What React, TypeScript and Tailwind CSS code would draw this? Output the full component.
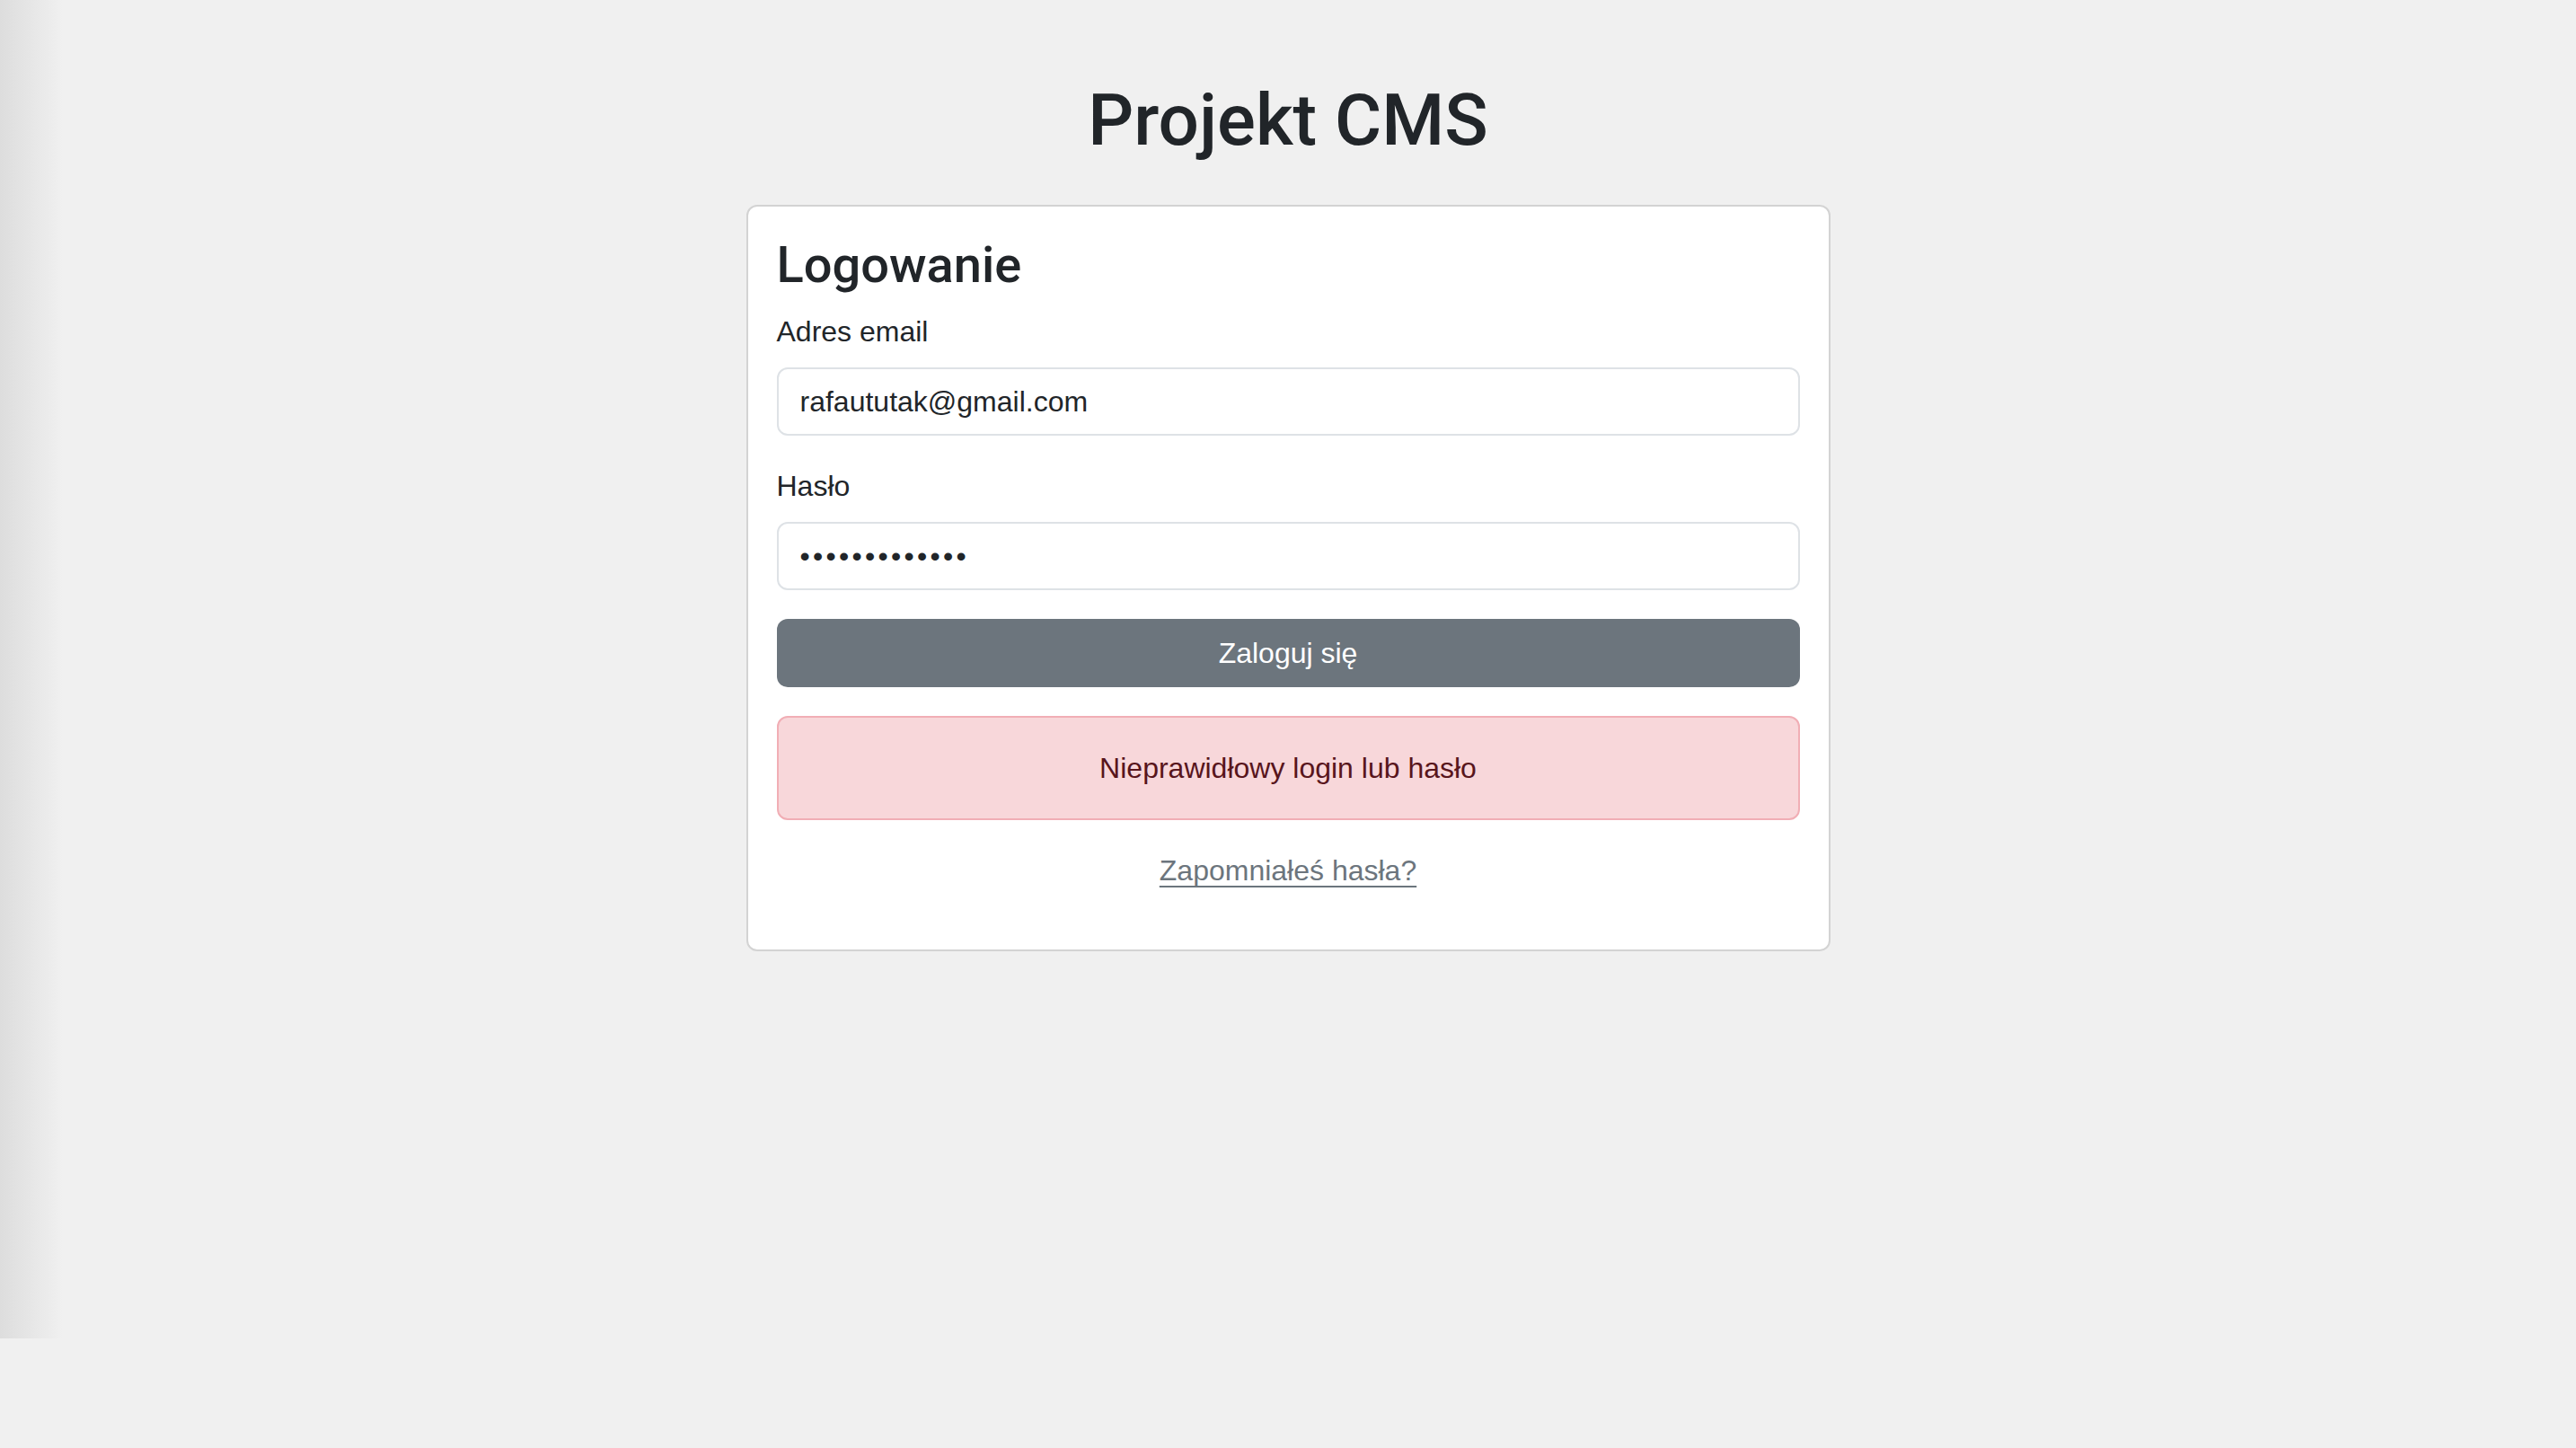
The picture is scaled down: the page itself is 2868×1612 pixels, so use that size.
export default function App() {
  return (
    <div className="relative min-h-screen bg-[#f0f0f0] font-['Liberation_Sans',Arial,sans-serif] text-[#212529]">
      {/* Window edge shadow */}
      <div className="pointer-events-none absolute left-0 top-0 h-[1490px] w-[70px] bg-gradient-to-r from-[#dddddd] to-transparent" />

      <div className="relative flex flex-col items-center pt-[86px]">
        <h1 className="mb-[46px] font-['Roboto',sans-serif] text-[80px] font-medium leading-[1.2]">Projekt CMS</h1>

        {/* Login card */}
        <div className="w-[1207px] rounded-[12px] border-2 border-[#d3d3d3] bg-white p-[32px]">
          <h3 className="mb-[16px] font-['Roboto',sans-serif] text-[56px] font-medium leading-[1.2]">Logowanie</h3>

          <div className="mb-[32px]">
            <label className="mb-[16px] block text-[32px] leading-[1.5]">Adres email</label>
            <div className="flex h-[76px] items-center rounded-[12px] border-2 border-[#dee2e6] px-[24px] text-[32px]">
              rafaututak@gmail.com
            </div>
          </div>

          <div className="mb-[32px]">
            <label className="mb-[16px] block text-[32px] leading-[1.5]">Hasło</label>
            <div className="flex h-[76px] items-center rounded-[12px] border-2 border-[#dee2e6] px-[24px] text-[32px] tracking-[3.3px]">
              •••••••••••••
            </div>
          </div>

          <button className="mb-[32px] flex h-[76px] w-full items-center justify-center rounded-[12px] bg-[#6c757d] text-[32px] text-white">
            Zaloguj się
          </button>

          <div className="mb-[32px] rounded-[12px] border-2 border-[#f1aeb5] bg-[#f8d7da] p-[32px] text-center text-[32px] leading-[1.5] text-[#58151c]">
            Nieprawidłowy login lub hasło
          </div>

          <p className="mb-[32px] text-center text-[32px] leading-[1.5]">
            <a href="#" className="text-[#6c757d] underline decoration-2 underline-offset-[6px]">
              Zapomniałeś hasła?
            </a>
          </p>
        </div>
      </div>
    </div>
  );
}
